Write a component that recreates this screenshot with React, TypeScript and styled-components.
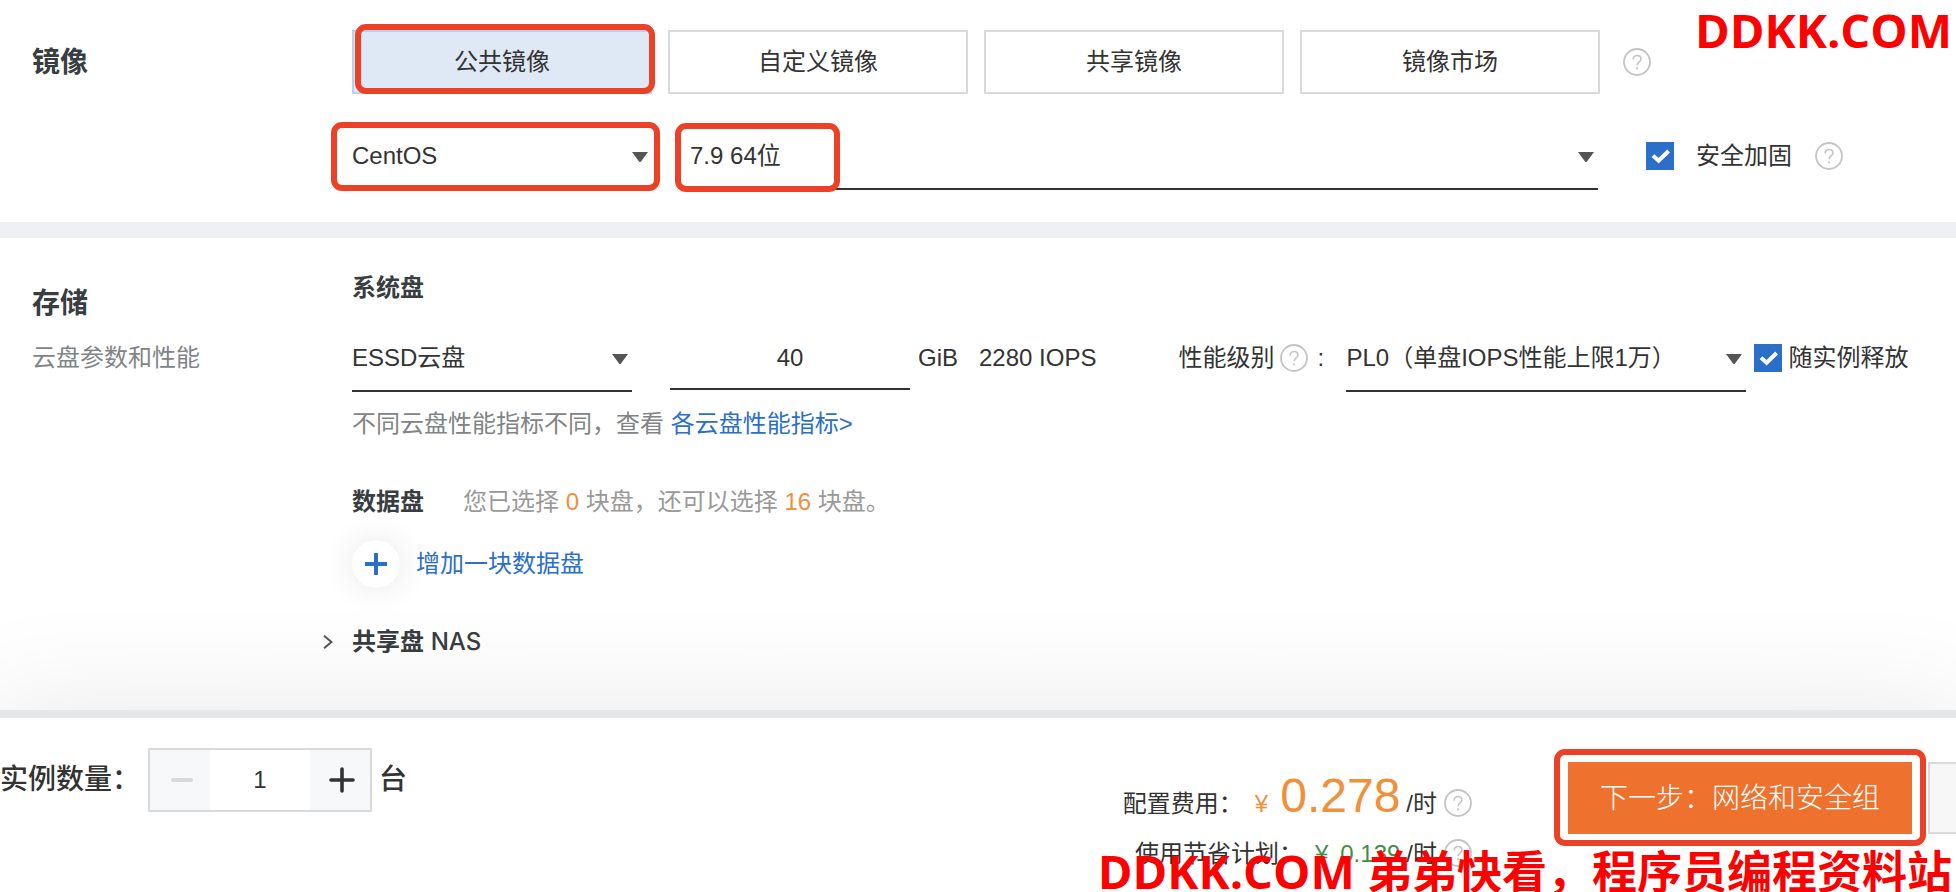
import React, { useState } from 'react';
import styled, { createGlobalStyle } from 'styled-components';

const GlobalStyle = createGlobalStyle`
  *, *::before, *::after { box-sizing: border-box; }
  body {
    margin: 0;
    background: #fff;
    color: #333;
    font-family: "Liberation Sans", "Noto Sans CJK SC", sans-serif;
    font-size: 24px;
    line-height: 32px;
  }
  button, input, select { font: inherit; color: inherit; }
`;

const Page = styled.div`
  position: relative;
  display: flex;
  flex-direction: column;
  min-height: 100vh;
  overflow: hidden;
`;

const Section = styled.section<{ $top: number; $bottom: number }>`
  display: grid;
  grid-template-columns: 320px minmax(0, 1fr);
  padding: ${p => p.$top}px 32px ${p => p.$bottom}px;
`;

const Divider = styled.div`
  height: 16px;
  background: #eff0f5;
`;

const SectionTitle = styled.h2<{ $height: number }>`
  margin: 0;
  font-size: 28px;
  line-height: ${p => p.$height}px;
  font-weight: 700;
  color: #373d41;
`;

const SideLabel = styled.div`
  padding-top: 14px;
`;

const SideNote = styled.p`
  margin: 20px 0 0;
  color: #808486;
`;

const Row = styled.div<{ $top?: number }>`
  display: flex;
  align-items: center;
  margin-top: ${p => p.$top ?? 0}px;
`;

const Options = styled.div`
  display: grid;
  grid-template-columns: repeat(4, minmax(0, 1fr));
  flex: 0 1 1248px;
  gap: 16px;
`;

/* Red frame that calls out a control. */
const Marked = styled.div<{ $inset: string }>`
  position: relative;
  display: flex;
  &::after {
    content: '';
    position: absolute;
    inset: ${p => p.$inset};
    border: 6px solid #ec4127;
    border-radius: 11px;
    pointer-events: none;
  }
`;

const OptionButton = styled.button<{ $active?: boolean }>`
  flex: 1;
  height: 64px;
  padding: 0;
  border: 2px solid ${p => (p.$active ? '#b8d2ee' : '#d9d9d9')};
  background: ${p => (p.$active ? '#dfe9f6' : '#fff')};
`;

const FieldGroup = styled.div`
  display: flex;
  flex: 0 1 1246px;
  gap: 38px;
`;

const OsSlot = styled(Marked)`
  flex: 0 1 300px;
`;

const VersionSlot = styled(Marked)`
  flex: 1;
  &::after { width: 165px; }
`;

const SelectBox = styled.div<{ $grow?: boolean; $width?: number }>`
  position: relative;
  flex: ${p => (p.$grow ? '1' : `0 1 ${p.$width}px`)};
  height: 68px;
  border-bottom: 2px solid #333;
`;

const NativeSelect = styled.select`
  appearance: none;
  width: 100%;
  height: 100%;
  padding: 2px 32px 0 0;
  border: 0;
  background: transparent;
  outline: 0;
`;

const Arrow = styled.svg`
  position: absolute;
  right: 4px;
  top: 30px;
  pointer-events: none;
`;

const CheckLabel = styled.label<{ $gap: number; $left: number }>`
  display: flex;
  align-items: center;
  gap: ${p => p.$gap}px;
  margin-left: ${p => p.$left}px;
  white-space: nowrap;
`;

const CheckWrap = styled.span`
  position: relative;
  display: flex;
  width: 28px;
  height: 28px;
  svg { position: absolute; inset: 0; pointer-events: none; }
  input:not(:checked) + svg { display: none; }
`;

const CheckInput = styled.input`
  appearance: none;
  width: 28px;
  height: 28px;
  margin: 0;
  border: 2px solid #2b6fc8;
  &:checked { background: #2b6fc8; }
`;

const HelpButton = styled.button<{ $left?: number }>`
  display: flex;
  flex: none;
  width: 28px;
  height: 28px;
  margin: 0 0 0 ${p => p.$left ?? 0}px;
  padding: 0;
  border: 0;
  background: none;
`;

const Subtitle = styled.h3`
  margin: 0;
  font-size: 24px;
  line-height: 32px;
  font-weight: 700;
  color: #373d41;
`;

const SizeInput = styled.input`
  flex: 0 1 240px;
  width: 240px;
  height: 66px;
  margin: 0 8px 0 38px;
  padding: 4px 0 0;
  border: 0;
  border-bottom: 2px solid #333;
  outline: 0;
  background: transparent;
  text-align: center;
  align-self: flex-start;
`;

const Unit = styled.span<{ $left?: number }>`
  margin-left: ${p => p.$left ?? 0}px;
  white-space: nowrap;
`;

const Colon = styled.span`
  width: 38px;
  padding-left: 9px;
`;

const Note = styled.p`
  margin: 16px 0 0;
  color: #808486;
`;

const Link = styled.a`
  color: #2b6fc8;
  text-decoration: none;
`;

const Hint = styled.p`
  margin: 0 0 0 39px;
  color: #999;
`;

const Count = styled.span`
  color: #f0903a;
`;

const AddButton = styled.button`
  display: flex;
  align-items: center;
  gap: 16px;
  margin-top: 22px;
  padding: 0;
  border: 0;
  background: none;
  color: #2b6fc8;
`;

const AddCircle = styled.span`
  display: flex;
  align-items: center;
  justify-content: center;
  width: 48px;
  height: 48px;
  border-radius: 50%;
  background: #fff;
  box-shadow: 0 0 32px rgba(0, 0, 0, 0.1);
`;

const Expander = styled.button`
  display: flex;
  align-items: center;
  gap: 18px;
  margin: 38px 0 0 -30px;
  padding: 0;
  border: 0;
  background: none;
  font-weight: 700;
  color: #373d41;
`;

const Latin = styled.span`
  font-family: Inter, "Liberation Sans", sans-serif;
  font-weight: 500;
`;

const Footer = styled.footer`
  position: relative;
  flex: 1;
  display: flex;
  align-items: flex-start;
  padding-top: 30px;
  border-top: 8px solid #e6e7e9;
  background: #fff;
  box-shadow: 0 20px 120px 20px rgba(0, 0, 0, 0.09);
`;

const QuantityLabel = styled.label`
  width: 148px;
  font-size: 28px;
  line-height: 64px;
  font-weight: 500;
  white-space: nowrap;
`;

const Stepper = styled.div`
  display: flex;
  width: 224px;
  height: 64px;
  border: 2px solid #d9d9d9;
`;

const StepButton = styled.button`
  display: flex;
  align-items: center;
  justify-content: center;
  width: 60px;
  padding: 0;
  border: 0;
  background: #f7f8fa;
`;

const StepInput = styled.input`
  flex: 1;
  width: 0;
  padding: 0;
  border: 0;
  outline: 0;
  text-align: center;
`;

const QuantityUnit = styled.span`
  margin-left: 7px;
  font-size: 28px;
  line-height: 64px;
  font-weight: 500;
`;

const Prices = styled.div`
  display: flex;
  flex-direction: column;
  align-items: flex-end;
  margin: 24px 96px 0 auto;
`;

const PriceRow = styled.div<{ $top?: number }>`
  display: flex;
  align-items: flex-end;
  margin-top: ${p => p.$top ?? 0}px;
  white-space: nowrap;
`;

const Money = styled.span<{ $color: string }>`
  display: flex;
  align-items: flex-end;
  gap: 12px;
  margin: 0 6px 0 12px;
  color: ${p => p.$color};
`;

const BigNumber = styled.span`
  font-size: 48px;
  line-height: 48px;
`;

const PriceHelp = styled.span`
  margin: 0 0 3px 7px;
`;

const NextButton = styled.button`
  width: 344px;
  height: 72px;
  padding: 2px 0 0;
  border: 0;
  background: #ee722e;
  color: #fff;
  font-size: 28px;
  font-weight: 300;
`;

const Actions = styled.div`
  display: flex;
  gap: 16px;
  margin-top: 14px;
`;

const CutButton = styled.button`
  width: 28px;
  height: 72px;
  padding: 0;
  border: 2px solid #d9d9d9;
  border-right: 0;
  background: #f7f7f7;
`;

const Watermark = styled.div<{ $edge: 'top' | 'bottom' }>`
  position: absolute;
  right: 4px;
  ${p => (p.$edge === 'top' ? 'top: 0;' : 'bottom: -10px;')}
  color: #f00;
  font-family: "Open Sans", "Noto Sans CJK SC", sans-serif;
  font-size: 47px;
  line-height: 60px;
  font-weight: 700;
  white-space: nowrap;
  pointer-events: none;
`;

const WatermarkCn = styled.span`
  font-size: 45px;
`;

function Help({ left }: { left?: number }) {
  return (
    <HelpButton type="button" $left={left} aria-label="?">
      <svg width="28" height="28" viewBox="0 0 28 28" fill="none" stroke="#c4c4c4">
        <circle cx="14" cy="14" r="13" strokeWidth="1.8" />
        <path d="M10.2 11.4c0-2.4 1.5-3.9 3.9-3.9s3.8 1.5 3.8 3.5c0 3-3.8 3.2-3.8 6.2" strokeWidth="1.6" />
        <circle cx="14.1" cy="20.4" r="1.1" fill="#c4c4c4" stroke="none" />
      </svg>
    </HelpButton>
  );
}

function Select({ value, label, width, grow }: {
  value: string; label: string; width?: number; grow?: boolean;
}) {
  return (
    <SelectBox $width={width} $grow={grow}>
      <NativeSelect aria-label={label} defaultValue={value}>
        <option>{value}</option>
      </NativeSelect>
      <Arrow width="16" height="10" viewBox="0 0 16 10">
        <path d="M0 0h16L9 9.4q-1 1.2-2 0z" fill="#555" />
      </Arrow>
    </SelectBox>
  );
}

function Check({ children, gap, left }: { children: React.ReactNode; gap: number; left: number }) {
  return (
    <CheckLabel $gap={gap} $left={left}>
      <CheckWrap>
        <CheckInput type="checkbox" defaultChecked />
        <svg width="28" height="28" viewBox="0 0 28 28" fill="none">
          <path d="M7 13.6l5.6 5.2L22.6 9" stroke="#fff" strokeWidth="4" />
        </svg>
      </CheckWrap>
      {children}
    </CheckLabel>
  );
}

const images = ['公共镜像', '自定义镜像', '共享镜像', '镜像市场'];

export default function App() {
  const [image, setImage] = useState(0);
  const [size, setSize] = useState('40');
  const [quantity, setQuantity] = useState(1);

  return (
    <Page>
      <GlobalStyle />
      <Section $top={30} $bottom={32}>
        <SectionTitle $height={66}>镜像</SectionTitle>
        <div>
          <Row>
            <Options>
              {images.map((name, i) => {
                const button = (
                  <OptionButton key={name} type="button" $active={i === image} onClick={() => setImage(i)}>
                    {name}
                  </OptionButton>
                );
                return i === 0 ? <Marked key={name} $inset="-6px -3px 0 3px">{button}</Marked> : button;
              })}
            </Options>
            <Help left={23} />
          </Row>
          <Row $top={28}>
            <FieldGroup>
              <OsSlot $inset="0 -8px -1px -21px">
                <Select label="CentOS" value="CentOS" grow />
              </OsSlot>
              <VersionSlot $inset="1px auto -2px -15px">
                <Select label="7.9 64位" value="7.9 64位" grow />
              </VersionSlot>
            </FieldGroup>
            <Check gap={22} left={48}>安全加固</Check>
            <Help left={23} />
          </Row>
        </div>
      </Section>
      <Divider />
      <Section $top={34} $bottom={52}>
        <SideLabel>
          <SectionTitle $height={36}>存储</SectionTitle>
          <SideNote>云盘参数和性能</SideNote>
        </SideLabel>
        <div>
          <Subtitle>系统盘</Subtitle>
          <Row $top={20}>
            <Select label="系统盘" value="ESSD云盘" width={280} />
            <SizeInput aria-label="GiB" value={size} onChange={e => setSize(e.target.value)} />
            <Unit>GiB</Unit>
            <Unit $left={21}>2280 IOPS</Unit>
            <Unit $left={82}>性能级别</Unit>
            <Help left={6} />
            <Colon>:</Colon>
            <Select label="性能级别" value="PL0（单盘IOPS性能上限1万）" width={400} />
            <Check gap={6} left={8}>随实例释放</Check>
          </Row>
          <Note>
            不同云盘性能指标不同，查看 <Link href="#disk">各云盘性能指标&gt;</Link>
          </Note>
          <Row $top={46}>
            <Subtitle>数据盘</Subtitle>
            <Hint>
              您已选择 <Count>0</Count> 块盘，还可以选择 <Count>16</Count> 块盘。
            </Hint>
          </Row>
          <AddButton type="button">
            <AddCircle>
              <svg width="22" height="22" viewBox="0 0 22 22" stroke="#2b6fc8" strokeWidth="4">
                <path d="M11 0v22M0 11h22" />
              </svg>
            </AddCircle>
            增加一块数据盘
          </AddButton>
          <Expander type="button">
            <svg width="12" height="14" viewBox="0 0 12 14" fill="none" stroke="#555" strokeWidth="2">
              <path d="M2 0.8L9.4 7L2 13.2" />
            </svg>
            <span>共享盘 <Latin>NAS</Latin></span>
          </Expander>
        </div>
      </Section>
      <Footer>
        <QuantityLabel htmlFor="quantity">实例数量：</QuantityLabel>
        <Stepper>
          <StepButton type="button" aria-label="-" disabled={quantity === 1} onClick={() => setQuantity(quantity - 1)}>
            <svg width="26" height="26" viewBox="0 0 26 26" stroke="#d9d9d9" strokeWidth="4" strokeLinecap="round">
              <path d="M6 13h18" />
            </svg>
          </StepButton>
          <StepInput id="quantity" value={quantity} onChange={e => setQuantity(Number(e.target.value) || 1)} />
          <StepButton type="button" aria-label="+" onClick={() => setQuantity(quantity + 1)}>
            <svg width="30" height="26" viewBox="0 0 30 26" stroke="#333" strokeWidth="3.6" strokeLinecap="round">
              <path d="M6 13h22M17 2v22" />
            </svg>
          </StepButton>
        </Stepper>
        <QuantityUnit>台</QuantityUnit>
        <Prices>
          <PriceRow>
            配置费用：
            <Money $color="#f0903a">¥ <BigNumber>0.278</BigNumber></Money>
            /时
            <PriceHelp><Help /></PriceHelp>
          </PriceRow>
          <PriceRow $top={18}>
            使用节省计划：
            <Money $color="#3f8f43">¥ <span>0.139</span></Money>
            /时
            <PriceHelp><Help /></PriceHelp>
          </PriceRow>
        </Prices>
        <Actions>
          <Marked $inset="-13px -14px -12px">
            <NextButton type="button">下一步：网络和安全组</NextButton>
          </Marked>
          <CutButton type="button" aria-hidden="true" tabIndex={-1} />
        </Actions>
      </Footer>
      <Watermark $edge="top">DDKK.COM</Watermark>
      <Watermark $edge="bottom">
        DDKK.COM <WatermarkCn>弟弟快看，程序员编程资料站</WatermarkCn>
      </Watermark>
    </Page>
  );
}
